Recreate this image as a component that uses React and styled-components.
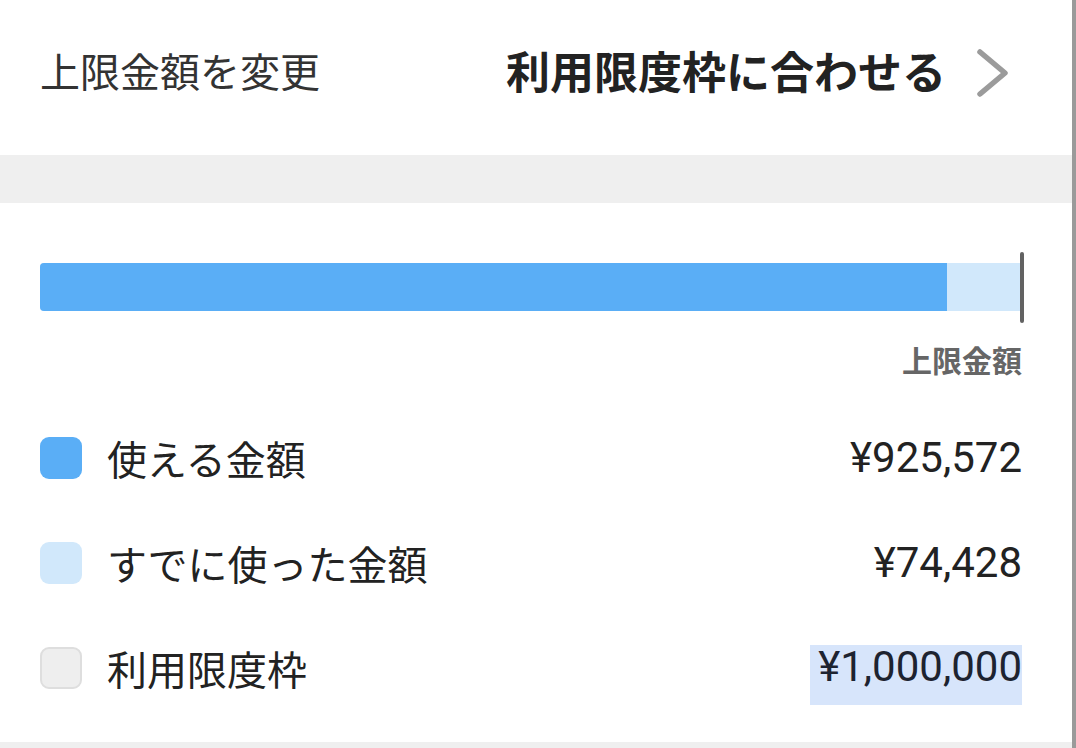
import React from 'react'
import styled, { createGlobalStyle } from 'styled-components'

const GlobalStyle = createGlobalStyle`
  html, body {
    margin: 0;
    padding: 0;
    background: #fff;
  }
  body {
    font-family: "Noto Sans CJK JP", "Noto Sans", sans-serif;
    color: #222;
  }
`

const Frame = styled.div`
  display: flex;
  width: 1076px;
  height: 748px;
  overflow: hidden;
`

const Panel = styled.div`
  flex: 1;
  display: flex;
  flex-direction: column;
  background: #fff;
`

const EdgeRule = styled.div`
  width: 4px;
  background: #9a9a9a;
`

const Header = styled.div`
  height: 155px;
  box-sizing: border-box;
  display: flex;
  align-items: center;
  padding: 0 62px 16px 40px;
`

const HeaderTitle = styled.div`
  font-size: 40px;
  line-height: 48px;
  color: #333;
  flex: 1;
`

const HeaderAction = styled.div`
  display: flex;
  align-items: center;
  gap: 30px;
  font-size: 44px;
  line-height: 52px;
  font-weight: 700;
  color: #222;

  svg {
    margin-top: 6px;
  }
`

const Spacer = styled.div`
  height: ${(p) => p.h}px;
  background: #efefef;
`

const Body = styled.div`
  flex: 1;
  display: flex;
  flex-direction: column;
  padding: 60px 50px 0 40px;
`

const BarWrap = styled.div`
  position: relative;
`

const Bar = styled.div`
  display: flex;
  height: 48px;
  border-radius: 4px 0 0 4px;
  overflow: hidden;
  background: #d1e8fb;
`

const BarFill = styled.div`
  height: 100%;
  background: #5aaef6;
`

const Marker = styled.div`
  position: absolute;
  top: -11px;
  bottom: -12px;
  right: -2px;
  width: 4px;
  border-radius: 2px;
  background: #626262;
`

const LimitLabel = styled.div`
  margin-top: 30px;
  text-align: right;
  font-size: 30px;
  line-height: 36px;
  font-weight: 700;
  color: #666;
`

const Legend = styled.div`
  margin-top: 28px;
  display: flex;
  flex-direction: column;
`

const Row = styled.div`
  height: 105px;
  display: flex;
  align-items: center;
`

const Swatch = styled.div`
  width: 42px;
  height: 42px;
  box-sizing: border-box;
  border-radius: 9px;
  background: ${(p) => p.color};
  border: ${(p) => (p.outlined ? '2px solid #dedede' : 'none')};
  margin-right: 25px;
`

const Label = styled.div`
  font-size: 40px;
  line-height: 48px;
  color: #222;
`

const Value = styled.div`
  margin-left: auto;
  font-family: Roboto, "Liberation Sans", sans-serif;
  font-size: 42px;
  line-height: 42px;
  color: ${(p) => (p.selected ? '#1d2330' : '#222')};
  ${(p) =>
    p.selected &&
    `
    background: #d7e5fb;
    margin-top: 15px;
    padding: 1px 0 17px 8px;
  `}
`

const Chevron = () => (
  <svg width="34" height="50" viewBox="0 0 34 50">
    <path
      d="M4 4 L29 25 L4 46"
      fill="none"
      stroke="#9b9b9b"
      strokeWidth="5.5"
      strokeLinecap="round"
      strokeLinejoin="round"
    />
  </svg>
)

const limit = 1000000
const used = 74428
const available = limit - used

const yen = (n) => '¥' + n.toLocaleString('en-US')

const rows = [
  { label: '使える金額', value: available, color: '#5aaef6' },
  { label: 'すでに使った金額', value: used, color: '#d1e8fb' },
  { label: '利用限度枠', value: limit, color: '#eeeeee', outlined: true, selected: true },
]

export default function App() {
  return (
    <Frame>
      <GlobalStyle />
      <Panel>
        <Header>
          <HeaderTitle>上限金額を変更</HeaderTitle>
          <HeaderAction>
            利用限度枠に合わせる
            <Chevron />
          </HeaderAction>
        </Header>
        <Spacer h={48} />
        <Body>
          <BarWrap>
            <Bar>
              <BarFill style={{ width: `${(available / limit) * 100 - 0.2}%` }} />
            </Bar>
            <Marker />
          </BarWrap>
          <LimitLabel>上限金額</LimitLabel>
          <Legend>
            {rows.map((r) => (
              <Row key={r.label}>
                <Swatch color={r.color} outlined={r.outlined} />
                <Label>{r.label}</Label>
                <Value selected={r.selected}>{yen(r.value)}</Value>
              </Row>
            ))}
          </Legend>
        </Body>
        <Spacer h={6} />
      </Panel>
      <EdgeRule />
    </Frame>
  )
}
